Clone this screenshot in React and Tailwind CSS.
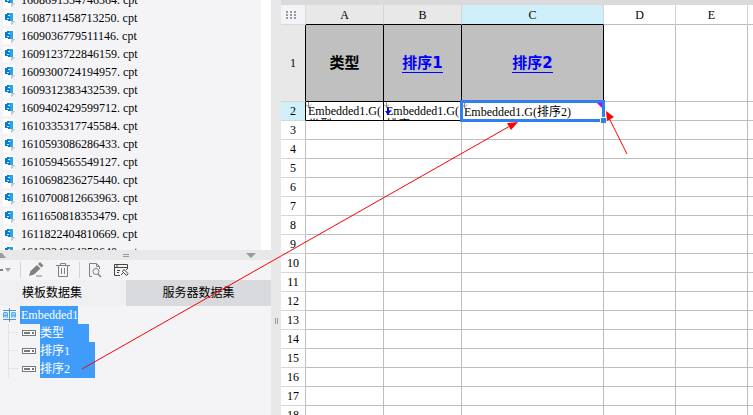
const FILES = [
  '1608691354746364.cpt',
  '1608711458713250.cpt',
  '1609036779511146.cpt',
  '1609123722846159.cpt',
  '1609300724194957.cpt',
  '1609312383432539.cpt',
  '1609402429599712.cpt',
  '1610335317745584.cpt',
  '1610593086286433.cpt',
  '1610594565549127.cpt',
  '1610698236275440.cpt',
  '1610700812663963.cpt',
  '1611650818353479.cpt',
  '1611822404810669.cpt',
  '1612234364359640.cpt',
];

const FIELDS = ['类型', '排序1', '排序2'];

const EMPTY_ROWS = Array.from({ length: 16 }, (_, i) => i + 3);

function CptIcon() {
  return (
    <svg width="12" height="15" viewBox="0 0 12 15" className="shrink-0" shapeRendering="crispEdges">
      <path d="M0 0h12v10l-4 5H0z" fill="#fff" />
      <path d="M8 10h4l-4 5z" fill="#c9c9c9" />
      <path d="M2 3h2V2h3v8H5V9H2z" fill="#0a78d4" />
      <path d="M6 2h4v8H7V6H6z" fill="#22a9e6" />
      <path d="M5 4h2v1H5zM4 7h2v1H4z" fill="#d8effb" />
    </svg>
  );
}

function FileItem({ name }) {
  const [base, ext] = name.split('.');
  return (
    <li className="flex h-[18px] items-center gap-[6px] pl-[3px]">
      <CptIcon />
      <span className="whitespace-nowrap leading-[18px]">
        {base}.<span className="ml-[3px]">{ext}</span>
      </span>
    </li>
  );
}

function FieldIcon() {
  return (
    <svg width="14" height="6" viewBox="0 0 14 6" className="shrink-0" shapeRendering="crispEdges">
      <path d="M0 0h14v6H0z" fill="#777" />
      <path d="M1 1h12v4H1z" fill="#fff" />
      <path d="M2 2h6v2H2zM10 2h2v2h-2z" fill="#777" />
    </svg>
  );
}

function Toolbar() {
  return (
    <div className="flex h-5 items-center text-[#808080]">
      <button aria-label="Add" className="flex w-5 items-center">
        <svg width="12" height="10" viewBox="0 0 12 10">
          <path d="M0 4h3v2H0z" fill="currentColor" />
          <path d="M5 3h6l-3 4z" fill="#a5a5a5" />
        </svg>
      </button>
      <span className="h-4 w-px bg-[#d4d4d6]" />
      <button aria-label="Edit" className="ml-2">
        <svg width="15" height="16" viewBox="0 0 15 16" fill="currentColor">
          <path d="M0 14l1.500-5L8 3l3.500 3.500L5 12.500zM9 2l2-2 3.500 3.500-2 2zM7 13.500h6v1H7z" />
        </svg>
      </button>
      <button aria-label="Delete" className="ml-3">
        <svg width="14" height="16" viewBox="0 0 14 16" fill="none" stroke="currentColor">
          <path d="M0 3.500h14M4.500 3V1.500h5V3M2.500 4v10.500h9V4M5.500 6v6M8.500 6v6" />
        </svg>
      </button>
      <span className="ml-[9px] h-4 w-px bg-[#d4d4d6]" />
      <button aria-label="Preview" className="ml-2">
        <svg width="14" height="16" viewBox="0 0 14 16" fill="none" stroke="currentColor">
          <path d="M4 14.500H1.500v-13h7l3 3V7M8.500 1.500v3h3" />
          <circle cx="8" cy="9.500" r="3" />
          <path d="M10 12l3 3" strokeWidth="1.500" />
        </svg>
      </button>
      <button aria-label="Connection" className="ml-3">
        <svg width="15" height="16" viewBox="0 0 15 16" fill="none" stroke="#454545">
          <path d="M6 13.500H.5v-11h13V6M.5 5.500h13M3 2v3M3 8.500h3M3 10.500h2" />
          <path d="M7 13l2-2M12 8l2-2M8.500 9.500l4 4 1.500-2-4-4zM14 13l-1-1" />
        </svg>
      </button>
    </div>
  );
}

function DatasetTree() {
  return (
    <div className="flex-1 text-white">
      <div className="flex h-[18px] items-center pl-[3px]">
        <svg width="14" height="14" viewBox="0 0 14 14" className="mr-[3px]" shapeRendering="crispEdges">
          <path d="M0 2h13v1H0zM0 11h13v1H0zM6 0h1v14H6z" fill="#3f95f0" />
          <path d="M0 4h5v6H0zM8 4h5v6H8z" fill="#a9d0f8" />
          <path d="M1 4h3v1H1zM1 7h3v1H1zM0 5h1v4H0zM4 5h1v4H4zM9 4h3v1H9zM9 7h3v1H9zM8 5h1v4H8zM12 5h1v4h-1z" fill="#5ba6f3" />
        </svg>
        <span className="w-[58px] bg-[#409cfb] pl-px leading-[18px]">Embedded1</span>
      </div>
      <ul className="ml-2">
        {FIELDS.map((f) => (
          <li key={f} className="flex h-[18px] items-center">
            <span className="mr-1 flex h-[18px] w-[10px] border-l border-[#e4e4e6]">
              <span className="h-[9px] w-full border-b border-[#e4e4e6]" />
            </span>
            <FieldIcon />
            <span className={`ml-1 h-[18px] bg-[#409cfb] leading-[18px] ${f === '类型' ? 'w-[49px]' : 'w-[55px]'}`}>
              {f}
            </span>
          </li>
        ))}
      </ul>
    </div>
  );
}

function Sidebar() {
  return (
    <aside className="flex w-[271px] shrink-0 flex-col bg-[#f4f4f7]">
      <div className="flex h-[250px] overflow-hidden">
        <ul className="-mt-[9px] flex-1">
          {FILES.map((f) => (
            <FileItem key={f} name={f} />
          ))}
        </ul>
        <div className="w-[10px] bg-white" />
      </div>
      <div className="flex h-[10px] items-center justify-between bg-[#e8e8e8] pr-[15px]">
        <svg width="6" height="5" viewBox="0 0 6 5" fill="#999">
          <path d="M0 0h2l4 5H0z" />
        </svg>
        <span className="h-[3px] w-[6px] border-y border-[#999]" />
        <svg width="10" height="5" viewBox="0 0 10 5" fill="#999">
          <path d="M0 0h10L5 5z" />
        </svg>
      </div>
      <Toolbar />
      <div role="tablist" className="flex h-[26px] text-black">
        <button role="tab" aria-selected="true" className="w-[126px] bg-[#f0f0f2] pl-[22px] text-left">
          模板数据集
        </button>
        <button role="tab" aria-selected="false" className="flex-1 bg-[#d9dadd]">
          服务器数据集
        </button>
      </div>
      <DatasetTree />
    </aside>
  );
}

function Anchor({ blue }) {
  return (
    <svg width="8" height="16" viewBox="0 0 8 16" className="absolute top-0 left-0" fill="none">
      <path d="M2.500 0v6M0 2.500l2.500 2.500L5 2.500" stroke="#888" />
      {blue && <path d="M3 6h2v3h2l-3 4-3-4h2z" fill="#0000ff" />}
    </svg>
  );
}

function Sheet() {
  const line = 'border-r border-b border-[#bdbdbd]';
  const dark = 'border-r border-b border-black';
  const title =
    "bg-[#c0c0c0] p-0 text-center font-['DejaVu_Sans','Noto_Sans_CJK_SC',sans-serif] text-[15px] leading-[18px] font-bold";
  const link = 'inline-block border-b border-b-[#0000ff] text-[#0000ff]';
  const formula = 'h-[18px] overflow-hidden pt-[2px] pl-[2px] leading-[14px]';
  return (
    <main className="min-w-0 flex-1 overflow-hidden bg-white">
      <div className="h-[5px] bg-[#dadadc]" />
      <table className="w-full table-fixed border-separate border-spacing-0">
        <colgroup>
          <col className="w-[25px]" />
          <col className="w-[78px]" />
          <col className="w-[78px]" />
          <col className="w-[142px]" />
          <col className="w-[72px]" />
          <col className="w-[72px]" />
          <col />
        </colgroup>
        <thead>
          <tr className="h-5">
            <th aria-label="Select all" className="border-r border-b border-[#d9d9dc] bg-[#f4f4f8] p-0">
              <svg width="10" height="8" viewBox="0 0 10 8" fill="#999" shapeRendering="crispEdges" className="ml-[5px]">
                <path d="M0 0h2v2H0zM4 0h2v2H4zM8 0h2v2H8zM0 3h2v2H0zM4 3h2v2H4zM8 3h2v2H8zM0 6h2v2H0zM4 6h2v2H4zM8 6h2v2H8z" />
              </svg>
            </th>
            <th className="border-r border-b border-r-[#d5d5d5] border-b-black bg-[#e8e8e8] p-0 font-normal">A</th>
            <th className="border-r border-b border-r-[#d5d5d5] border-b-black bg-[#e8e8e8] p-0 font-normal">B</th>
            <th className="border-r border-b border-r-[#d5d5d5] border-b-black bg-[#cff0fb] p-0 font-normal">C</th>
            <th className="border-r border-b border-r-[#d5d5d5] border-b-[#bdbdbd] p-0 font-normal">D</th>
            <th className="border-r border-b border-r-[#d5d5d5] border-b-[#bdbdbd] p-0 font-normal">E</th>
            <th className="border-b border-[#bdbdbd] p-0" />
          </tr>
        </thead>
        <tbody>
          <tr className="h-[77px]">
            <th className="border-r border-b border-r-black border-b-[#d5d5d5] bg-[#e8e8e8] p-0 font-normal">1</th>
            <td className={`${dark} ${title}`}>类型</td>
            <td className={`${dark} ${title}`}>
              <a href="#sort1" className={link}>排序1</a>
            </td>
            <td className={`${dark} ${title}`}>
              <a href="#sort2" className={link}>排序2</a>
            </td>
            <td className={line} />
            <td className={line} />
            <td className="border-b border-[#bdbdbd]" />
          </tr>
          <tr className="h-[19px]">
            <th className="border-r border-b border-r-black border-b-[#d5d5d5] bg-[#cff0fb] p-0 font-normal">2</th>
            <td className={`${dark} relative p-0`}>
              <Anchor />
              <div className={formula}>Embedded1.G(<br />类型)</div>
            </td>
            <td className={`${dark} relative p-0`}>
              <Anchor blue />
              <div className={formula}>Embedded1.G(<br />排序1)</div>
            </td>
            <td className={`${dark} relative p-0`}>
              <Anchor />
              <div className="h-[18px] pt-[2px] pl-[2px] leading-4 whitespace-nowrap">Embedded1.G(排序2)</div>
              <div className="absolute -inset-[2px] border-3 border-[#2f80ed]">
                <svg width="5" height="5" viewBox="0 0 5 5" className="absolute top-0 right-0" fill="#b400ff">
                  <path d="M0 0h5v5z" />
                </svg>
                <span className="absolute -right-1 -bottom-1 h-[6px] w-[6px] border-t border-l border-white bg-[#2f80ed]" />
              </div>
            </td>
            <td className={line} />
            <td className={line} />
            <td className="border-b border-[#bdbdbd]" />
          </tr>
          {EMPTY_ROWS.map((n) => (
            <tr key={n} className="h-[19px]">
              <th className="border-r border-b border-r-[#bdbdbd] border-b-[#d5d5d5] p-0 font-normal">{n}</th>
              <td className={line} />
              <td className={line} />
              <td className={line} />
              <td className={line} />
              <td className={line} />
              <td className="border-b border-[#bdbdbd]" />
            </tr>
          ))}
        </tbody>
      </table>
    </main>
  );
}

// Arrows drawn over both panes: dataset field to cell, and note on the cell corner.
function Arrows() {
  return (
    <svg width="753" height="415" viewBox="0 0 753 415" className="pointer-events-none absolute top-0 left-0" stroke="#f00" fill="#f00">
      <path d="M82 369L510 126M627 154L609 118" fill="none" />
      <path d="M518 122l-7 8-4-7zM606 111l8 6-7 4z" stroke="none" />
    </svg>
  );
}

export default function App() {
  return (
    <div className="relative flex h-screen overflow-hidden bg-white font-['Liberation_Serif','Noto_Sans_CJK_SC',serif] text-[12px] leading-[14px] text-black">
      <Sidebar />
      <div className="flex w-[10px] shrink-0 items-center justify-center bg-[#e8e8e8]">
        <span className="mt-[226px] h-[6px] w-[3px] border-x border-[#999]" />
      </div>
      <Sheet />
      <Arrows />
    </div>
  );
}
